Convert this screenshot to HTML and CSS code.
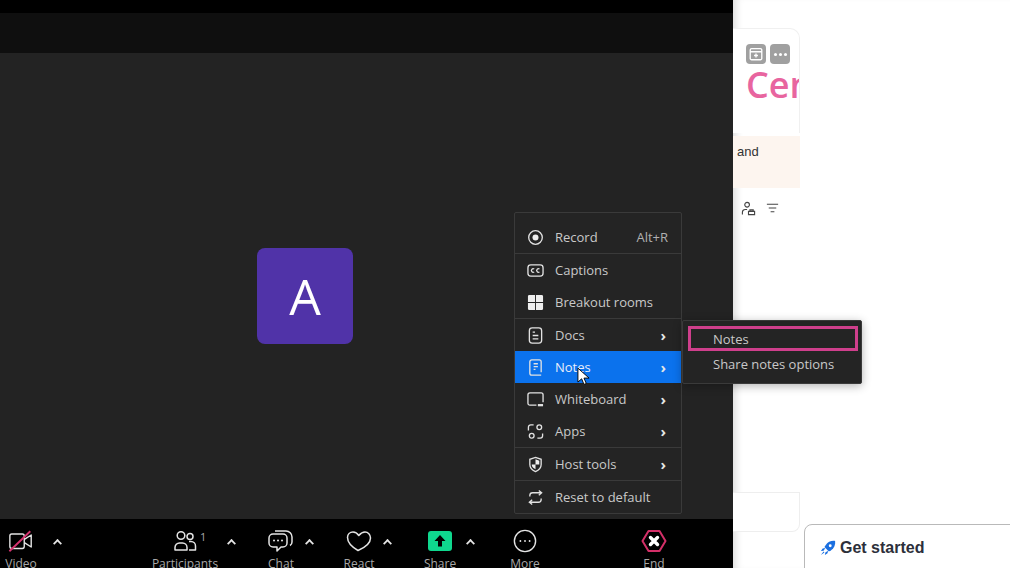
FILE: index.html
```html
<!DOCTYPE html>
<html lang="en">
<head>
    <meta name="viewport" content="width=device-width, initial-scale=1">
    <title>Meeting</title>
    <link rel="stylesheet" href="styles.css">
</head>
<body>

<div class="app">
    <div class="meeting">
        <div class="topbar"></div>

        <div class="stage">
            <div class="avatar">A</div>

            <div class="menu">
                <div class="menu-group first">
                    <div class="menu-item">
                        <svg class="menu-icon" viewBox="0 0 18 18"><circle cx="9" cy="9" r="7.2"/><circle class="fill" cx="9" cy="9" r="3.2"/></svg>
                        <span class="menu-label">Record</span>
                        <span class="shortcut">Alt+R</span>
                    </div>
                </div>
                <div class="menu-group">
                    <div class="menu-item">
                        <svg class="menu-icon" viewBox="0 0 18 18"><rect x="1" y="3" width="16" height="12" rx="3"/><path d="M7.6 7.4a1.9 1.9 0 1 0 0 3.2M13.2 7.4a1.9 1.9 0 1 0 0 3.2"/></svg>
                        <span class="menu-label">Captions</span>
                    </div>
                    <div class="menu-item">
                        <svg class="menu-icon" viewBox="0 0 18 18"><path class="fill" d="M1 2.5A1.5 1.5 0 0 1 2.5 1h6v7.500H1zM9.500 1h6A1.500 1.500 0 0 1 17 2.500v6H9.500zM1 9.500h7.500V17h-6A1.500 1.500 0 0 1 1 15.500zM9.500 9.500H17v6a1.500 1.500 0 0 1-1.500 1.500h-6z"/></svg>
                        <span class="menu-label">Breakout rooms</span>
                    </div>
                </div>
                <div class="menu-group">
                    <div class="menu-item">
                        <svg class="menu-icon" viewBox="0 0 18 18"><rect x="2.500" y="1" width="13" height="16" rx="3"/><path d="M6 5.500h2.500M6 9h6M6 12.500h6"/></svg>
                        <span class="menu-label">Docs</span>
                        <span class="chevron">›</span>
                    </div>
                    <div class="menu-item active">
                        <svg class="menu-icon" viewBox="0 0 18 18"><path d="M3 15V3a2 2 0 0 1 2-2h8a2 2 0 0 1 2 2v11M7 5h4.500M7 8h4.500M7 11h2M3 15a2 2 0 0 0 2 2h10"/></svg>
                        <span class="menu-label">Notes</span>
                        <span class="chevron">›</span>
                    </div>
                    <div class="menu-item">
                        <svg class="menu-icon" viewBox="0 0 18 18"><path d="M10 15H3a2 2 0 0 1-2-2V4a2 2 0 0 1 2-2h12a2 2 0 0 1 2 2v8"/><path class="thick" d="M11.500 15H17"/></svg>
                        <span class="menu-label">Whiteboard</span>
                        <span class="chevron">›</span>
                    </div>
                    <div class="menu-item">
                        <svg class="menu-icon" viewBox="0 0 18 18"><path d="M7 2H4a2.500 2.500 0 0 0-2.500 2.500V8M11 16h3a2.500 2.500 0 0 0 2.500-2.500V11"/><circle cx="13" cy="4.500" r="2.500"/><circle cx="5" cy="13.500" r="2.500"/></svg>
                        <span class="menu-label">Apps</span>
                        <span class="chevron">›</span>
                    </div>
                </div>
                <div class="menu-group">
                    <div class="menu-item">
                        <svg class="menu-icon" viewBox="0 0 18 18"><path d="M9 1.500l6 2v5.500c0 3.500-2.500 6-6 7.500-3.500-1.500-6-4-6-7.500V3.500z"/><path class="fill" d="M9 3.500l4 1.400V9H9zM9 9v5c-2.500-1-4-3-4-5z"/></svg>
                        <span class="menu-label">Host tools</span>
                        <span class="chevron">›</span>
                    </div>
                </div>
                <div class="menu-group">
                    <div class="menu-item">
                        <svg class="menu-icon" viewBox="0 0 18 18"><path d="M3 8V7a3 3 0 0 1 3-3h9M12.500 1.500L15.500 4l-3 2.500M15 10v1a3 3 0 0 1-3 3H3M5.500 11.500l-3 2.500 3 2.500"/></svg>
                        <span class="menu-label">Reset to default</span>
                    </div>
                </div>
            </div>

            <div class="submenu">
                <div class="submenu-item selected">Notes</div>
                <div class="submenu-item">Share notes options</div>
            </div>

            <svg class="cursor" viewBox="0 0 14 20"><path d="M1 1v15l4-3.500 2.500 6 2.500-1-2.500-5.800H13z"/></svg>
        </div>

        <div class="toolbar">
            <div class="tool video">
                <svg viewBox="0 0 28 24"><path d="M17.500 6.500a2 2 0 0 0-2-2H4a2 2 0 0 0-2 2V18a2 2 0 0 0 2 2h11.500a2 2 0 0 0 2-2zM18 10l7-4.500v13L18 14"/><path class="slash" d="M1.500 23L24 1.500"/></svg>
                <span>Video</span>
            </div>
            <div class="caret first-caret"></div>
            <div class="tool participants">
                <svg viewBox="0 0 24 24"><circle cx="8" cy="6.500" r="3.800"/><circle cx="17" cy="7.500" r="3"/><path d="M2 21v-2.500a4.500 4.500 0 0 1 4.500-4.500h3a4.500 4.500 0 0 1 4.500 4.500V21zM16 12.500h2a4.500 4.500 0 0 1 4.500 4.500v4H16"/></svg>
                <span>Participants</span>
                <sup class="count">1</sup>
            </div>
            <div class="caret"></div>
            <div class="tool chat">
                <svg viewBox="0 0 26 24"><path d="M5 5h10a4 4 0 0 1 4 4v5a4 4 0 0 1-4 4h-2l-4 4v-4H5a4 4 0 0 1-4-4V9a4 4 0 0 1 4-4z"/><path d="M7 2h11a6 6 0 0 1 6 6v5a4 4 0 0 1-2 3.500"/><path class="dots" d="M6 11.500h.01M10 11.500h.01M14 11.500h.01"/></svg>
                <span>Chat</span>
            </div>
            <div class="caret"></div>
            <div class="tool react">
                <svg viewBox="0 0 26 24"><path d="M12 21.500C6 18 1.500 14 1.500 8.500 1.500 5 4 3 7 3c2.500 0 4.500 1.500 5.800 3.500C14.500 4.500 16.500 3 19 3c3 0 5.500 2.500 5.500 6 0 5-5.500 9.500-12.500 12.500z"/></svg>
                <span>React</span>
            </div>
            <div class="caret"></div>
            <div class="tool share">
                <div class="share-icon">
                    <svg viewBox="0 0 14 14"><path d="M7 1L1.500 7H5v5.500h4V7h3.500z"/></svg>
                </div>
                <span>Share</span>
            </div>
            <div class="caret"></div>
            <div class="tool more">
                <svg viewBox="0 0 26 26"><circle cx="13" cy="13" r="11.500"/><path class="dots" d="M8 13h.01M13 13h.01M18 13h.01"/></svg>
                <span>More</span>
            </div>
            <div class="tool end">
                <svg viewBox="0 0 26 24"><path class="hex" d="M7.500 2h11L24.500 12l-6 10h-11L1.500 12z"/><path class="cross" d="M9.500 8.500l7 7M16.500 8.500l-7 7"/></svg>
                <span>End</span>
            </div>
        </div>
    </div>

    <div class="side">
        <div class="side-card">
            <div class="side-buttons">
                <div class="side-btn">
                    <svg viewBox="0 0 18 18"><path d="M4 3h10a1.500 1.500 0 0 1 1.500 1.500V14a1.500 1.500 0 0 1-1.500 1.500H4A1.500 1.500 0 0 1 2.500 14V4.500A1.500 1.500 0 0 1 4 3zM2.500 6.500h13M9 8.500v4.500M6.800 10.700h4.400"/></svg>
                </div>
                <div class="side-btn dots">
                    <i></i><i></i><i></i>
                </div>
            </div>
            <div class="brand">Center</div>
        </div>
        <div class="side-note">and</div>
        <div class="side-tools">
            <svg viewBox="0 0 16 16"><circle cx="6.500" cy="4" r="2.500"/><path d="M1.500 14.500V12a3 3 0 0 1 3-3h2M8 11h6.500v3.500H8zM9.500 11V9.500h3.500V11"/></svg>
            <svg viewBox="0 0 16 16"><path d="M2 3.500h12M4 7.500h8M6 11.500h4"/></svg>
        </div>
        <div class="side-foot"></div>
        <div class="get-started">
            <svg viewBox="0 0 18 18"><path class="rocket" d="M17 1c-4.500-.5-8 1-10.500 4.500L5 8l5 5 2.500-1.500C16 9 17.500 5.500 17 1z"/><path class="rocket" d="M3 9.500l3-.5-2 3-3 .5zM8.500 15l.5-3-3 2-.5 3zM1 17l3-4 1 1z"/><circle class="window" cx="11.500" cy="6.500" r="1.600"/></svg>
            <span>Get started</span>
        </div>
    </div>
</div>

</body>
</html>
```

FILE: styles.css
```css
* {
    box-sizing: border-box;
}

html, body {
    height: 100%;
}

body {
    margin: 0;
    overflow: hidden;
    font-family: "Open Sans", "Noto Sans", sans-serif;
    background-color: #ffffff;
}

.app {
    display: flex;
    width: 1010px;
    height: 568px;
    overflow: hidden;
}

/* meeting window */

.meeting {
    width: 733px;
    flex-shrink: 0;
    display: flex;
    flex-direction: column;
    background-color: #000000;
}

.topbar {
    height: 53px;
    flex-shrink: 0;
    background: linear-gradient(#000000 0, #000000 13px, #0f0f0f 13px);
}

.stage {
    position: relative;
    flex: 1;
    background-color: #232323;
}

.avatar {
    position: absolute;
    left: 257px;
    top: 195px;
    width: 96px;
    height: 96px;
    border-radius: 8px;
    background-color: #5033a8;
    color: #ffffff;
    font-size: 50px;
    display: flex;
    align-items: center;
    justify-content: center;
}

/* more menu */

.menu {
    position: absolute;
    left: 514px;
    top: 159px;
    width: 168px;
    padding-top: 8px;
    background-color: #242424;
    border: 1px solid #3a3a3a;
    border-radius: 2px;
}

.menu-group {
    border-top: 1px solid #3a3a3a;
}

.menu-group.first {
    border-top: none;
}

.menu-item {
    display: flex;
    align-items: center;
    height: 32px;
    padding: 0 13px 0 12px;
    font-size: 13px;
    color: #c9c9c9;
}

.menu-item.active {
    background-color: #0b72ed;
    color: #e8eefa;
}

.menu-icon {
    width: 17px;
    height: 17px;
    margin-right: 11px;
    flex-shrink: 0;
    fill: none;
    stroke: #e2e2e2;
    stroke-width: 1.4;
}

.menu-icon .fill {
    fill: #eeeeee;
    stroke: none;
}

.menu-icon .thick {
    stroke-width: 2.400;
}

.menu-label {
    flex: 1;
}

.shortcut {
    color: #b0b0b0;
}

.chevron {
    color: #e6e6e6;
    font-size: 15px;
    font-weight: 700;
    line-height: 1;
    margin-right: 2px;
}

/* notes submenu */

.submenu {
    position: absolute;
    left: 682px;
    top: 267px;
    width: 180px;
    height: 64px;
    padding: 5px 3px 0 5px;
    background-color: #242424;
    border: 1px solid #3a3a3a;
    border-radius: 2px;
    box-shadow: 0 2px 10px rgba(0, 0, 0, 0.3);
    z-index: 2;
}

.submenu-item {
    height: 25px;
    padding-left: 25px;
    display: flex;
    align-items: center;
    font-size: 13px;
    color: #c9c9c9;
}

.submenu-item.selected {
    border: 3px solid #cf3f8c;
    padding-left: 22px;
    margin-bottom: 0;
}

.cursor {
    position: absolute;
    left: 577px;
    top: 314px;
    width: 13px;
    height: 19px;
    fill: #ffffff;
    stroke: #000000;
    stroke-width: 1;
}

/* bottom toolbar */

.toolbar {
    position: relative;
    height: 49px;
    flex-shrink: 0;
    display: flex;
    align-items: flex-start;
    background-color: #000000;
    color: #a8a8a8;
    font-size: 12px;
}

.tool {
    position: relative;
    display: flex;
    flex-direction: column;
    align-items: center;
    padding-top: 10px;
}

.tool svg {
    width: 26px;
    height: 24px;
    fill: none;
    stroke: #e4e4e4;
    stroke-width: 1.500;
    stroke-linejoin: round;
}

.tool span {
    margin-top: 3px;
    line-height: 16px;
    white-space: nowrap;
}

.tool .slash {
    stroke: #d6336f;
    stroke-width: 2;
}

.tool .dots {
    stroke-width: 2;
    stroke-linecap: round;
}

.tool .hex {
    stroke: #d42f68;
    stroke-width: 2;
}

.tool .cross {
    stroke: #ffffff;
    stroke-width: 3.400;
    stroke-linecap: round;
}

.video {
    width: 42px;
}

.participants {
    width: 62px;
    margin-left: 93px;
}

.chat {
    width: 26px;
    margin-left: 33px;
}

.react {
    width: 26px;
    margin-left: 33px;
}

.share {
    width: 30px;
    margin-left: 34px;
}

.more {
    width: 26px;
    margin-left: 38px;
}

.end {
    width: 26px;
    margin-left: 103px;
}

.count {
    position: absolute;
    left: 46px;
    top: 12px;
    margin: 0;
    font-size: 11px;
    line-height: 12px;
}

.share-icon {
    width: 24px;
    height: 20px;
    margin: 2px 0 2px;
    border-radius: 3px;
    background-color: #0fd88e;
    display: flex;
    align-items: center;
    justify-content: center;
}

.tool .share-icon svg {
    width: 14px;
    height: 14px;
    fill: #000000;
    stroke: none;
}

.caret {
    width: 7px;
    height: 7px;
    margin: 21px 0 0 12px;
    border-left: 2px solid #e4e4e4;
    border-top: 2px solid #e4e4e4;
    transform: rotate(45deg) scale(0.9);
}

.caret.first-caret {
    margin-left: 12px;
}

/* page behind the meeting */

.side {
    position: relative;
    flex: 1;
    background-color: #ffffff;
    box-shadow: inset 8px 0 8px -6px #d8d8d8;
    font-family: "Liberation Sans", Arial, sans-serif;
}

.side-card {
    margin-top: 28px;
    width: 67px;
    height: 105px;
    padding: 15px 0 0 13px;
    background-color: #ffffff;
    border-right: 1px solid #f0f0f0;
    border-top: 1px solid #f0f0f0;
    border-top-right-radius: 10px;
    overflow: hidden;
}

.side-buttons {
    display: flex;
    gap: 4px;
}

.side-btn {
    width: 20px;
    height: 20px;
    border-radius: 4px;
    background-color: #a0a0a0;
    display: flex;
    align-items: center;
    justify-content: center;
    gap: 2px;
}

.side-btn svg {
    width: 16px;
    height: 16px;
    fill: none;
    stroke: #ffffff;
    stroke-width: 1.500;
}

.side-btn i {
    width: 3px;
    height: 3px;
    border-radius: 50%;
    background-color: #ffffff;
}

.brand {
    margin-top: 0;
    font-family: "Open Sans", sans-serif;
    font-size: 36px;
    font-weight: 600;
    line-height: 42px;
    color: #e8659f;
    white-space: nowrap;
}

.side-note {
    width: 67px;
    height: 52px;
    margin-top: 3px;
    padding: 8px 0 0 4px;
    background-color: #fdf5ef;
    font-size: 13px;
    color: #333333;
}

.side-tools {
    display: flex;
    gap: 9px;
    padding: 13px 0 0 8px;
}

.side-tools svg {
    width: 15px;
    height: 15px;
    fill: none;
    stroke: #444444;
    stroke-width: 1.200;
}

.side-foot {
    position: absolute;
    left: 0;
    top: 492px;
    width: 67px;
    height: 40px;
    background-color: #ffffff;
    border-top: 1px solid #eeeeee;
    border-right: 1px solid #eeeeee;
    border-bottom-right-radius: 8px;
    border-bottom: 1px solid #eeeeee;
}

.get-started {
    position: absolute;
    left: 71px;
    top: 524px;
    width: 220px;
    height: 60px;
    padding: 14px 0 0 15px;
    display: flex;
    align-items: flex-start;
    gap: 4px;
    background-color: #ffffff;
    border: 1px solid #b9b9b9;
    border-radius: 8px 0 0 0;
    font-size: 16px;
    font-weight: 700;
    color: #2c2f3a;
}

.get-started svg {
    width: 16px;
    height: 18px;
}

.get-started .rocket {
    fill: #1a6fe0;
}

.get-started .window {
    fill: #ffffff;
}
```
